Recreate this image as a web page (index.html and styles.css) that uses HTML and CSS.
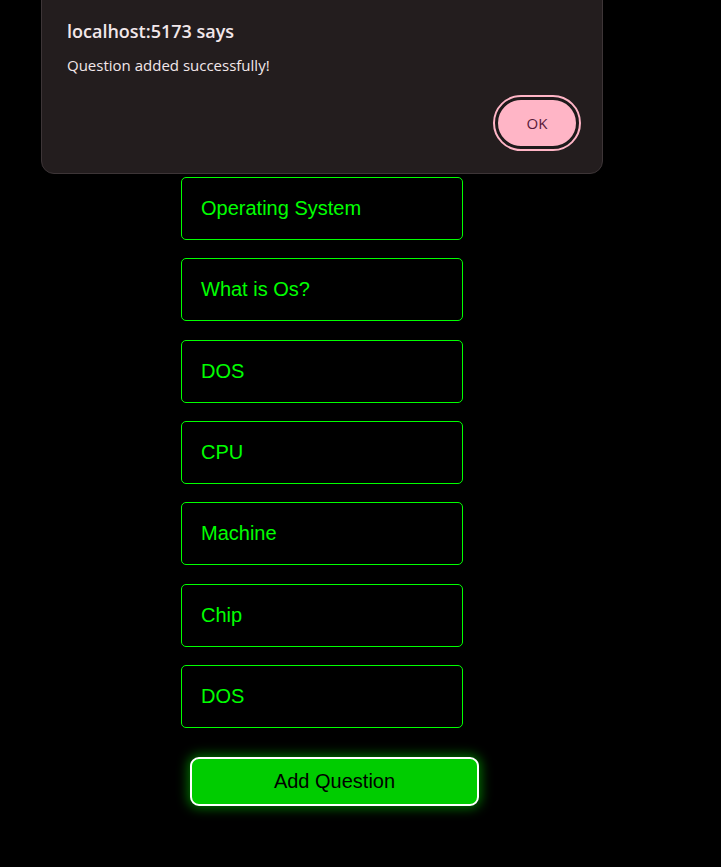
FILE: index.html
```html
<!DOCTYPE html>
<html>
<head>
<meta charset="utf-8">
<link rel="stylesheet" href="styles.css">
</head>
<body>
<form class="form">
  <div class="field">Operating System</div>
  <div class="field">What is Os?</div>
  <div class="field">DOS</div>
  <div class="field">CPU</div>
  <div class="field">Machine</div>
  <div class="field">Chip</div>
  <div class="field">DOS</div>
  <button type="button" class="submit">Add Question</button>
</form>
<div class="dialog">
  <div class="dialog-title">localhost:5173 says</div>
  <div class="dialog-msg">Question added successfully!</div>
  <div class="dialog-actions"><button type="button" class="ok">OK</button></div>
</div>
</body>
</html>
```
FILE: styles.css
```css
html, body {
  margin: 0;
  background: #000;
  height: 100%;
  overflow: hidden;
}
.form {
  display: flex;
  flex-direction: column;
  align-items: flex-start;
  gap: 18.33px;
  padding: 177px 0 0 181px;
}
.field {
  box-sizing: border-box;
  width: 282px;
  height: 63px;
  border: 1px solid #00ff00;
  border-radius: 5px;
  padding: 0 19px;
  display: flex;
  align-items: center;
  font-family: "Liberation Sans", Arial, sans-serif;
  font-size: 20px;
  color: #00ff00;
}
.submit {
  box-sizing: border-box;
  margin: 11px 0 0 9px;
  width: 289px;
  height: 49px;
  background: #00cc00;
  border: 2px solid #fff;
  border-radius: 9px;
  box-shadow: 0 0 12px 2px rgba(0, 255, 0, 0.45);
  font-family: "Liberation Sans", Arial, sans-serif;
  font-size: 20px;
  color: #000;
}
.dialog {
  position: absolute;
  left: 41px;
  top: -20px;
  box-sizing: border-box;
  width: 562px;
  height: 194px;
  background: #231d1e;
  border: 1px solid #3d3537;
  border-radius: 13px;
  padding: 38px 21px 0 25px;
  font-family: "Open Sans", "Noto Sans", sans-serif;
  color: #f2e7ea;
}
.dialog-title {
  font-size: 18px;
  font-weight: 600;
  line-height: 24px;
}
.dialog-msg {
  margin-top: 12px;
  font-size: 15px;
  line-height: 21px;
}
.dialog-actions {
  display: flex;
  justify-content: flex-end;
  margin-top: 19px;
}
.ok {
  box-sizing: border-box;
  width: 84px;
  height: 52px;
  margin: 2px;
  border: 3px solid #1e1a1b;
  border-radius: 26px;
  background: #ffb5c6;
  outline: 2px solid #ffb5c6;
  outline-offset: 0;
  font-family: "Open Sans", "Noto Sans", sans-serif;
  font-size: 15px;
  font-weight: 500;
  color: #5a1a3a;
}
```
